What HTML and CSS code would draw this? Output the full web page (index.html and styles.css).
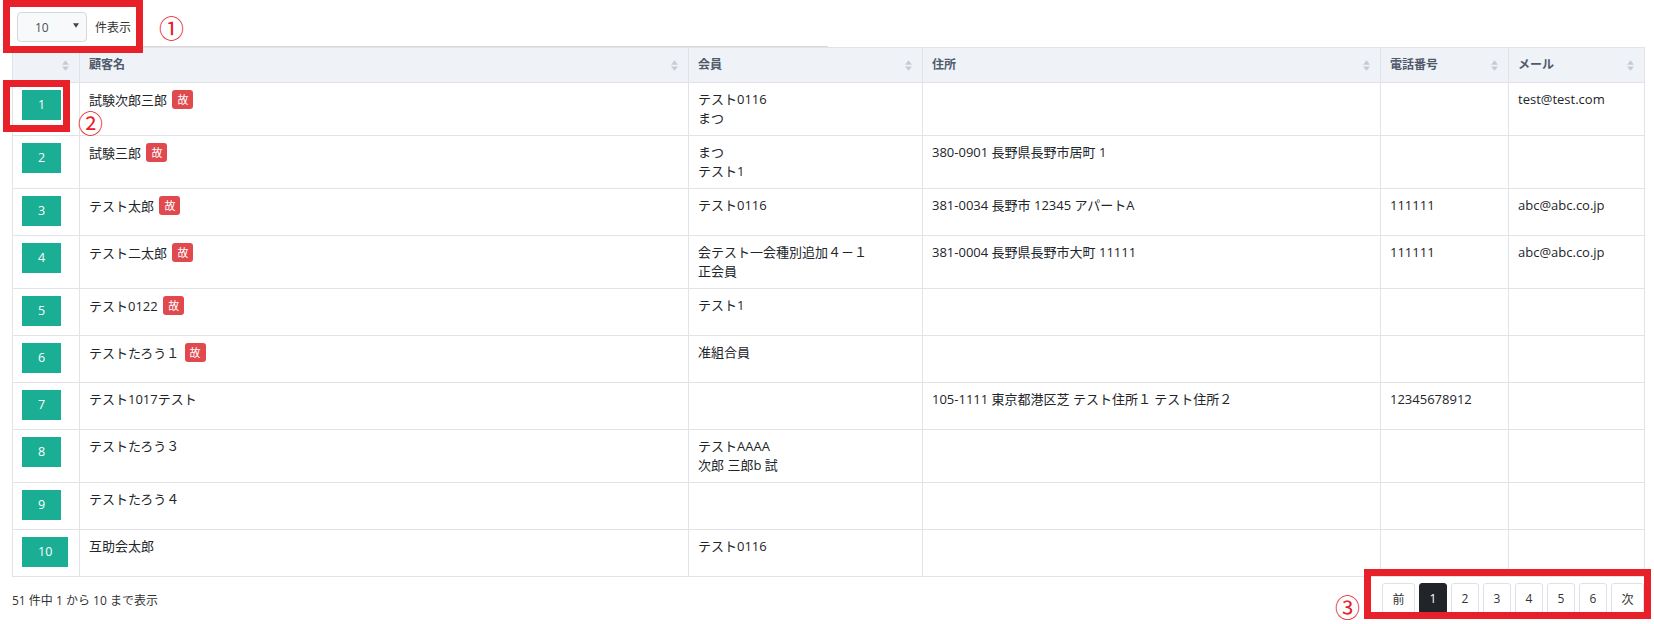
FILE: index.html
```html
<!DOCTYPE html>
<html lang="ja">
<head>
<meta charset="utf-8">
<title>顧客一覧</title>
<link rel="stylesheet" href="styles.css">
</head>
<body>
<div class="page">
  <div class="length">
    <div class="select"><span>10</span><svg class="caret" viewBox="0 0 8 6"><path d="M0 0H8L4 6Z"/></svg></div>
    <span class="length-label">件表示</span>
  </div>
  <div class="top-rule"></div>
  <table class="grid">
    <colgroup>
      <col class="c-idx"><col class="c-name"><col class="c-member"><col class="c-addr"><col class="c-tel"><col class="c-mail">
    </colgroup>
    <thead>
      <tr>
        <th><div class="th-in"><span></span><svg class="sort" viewBox="0 0 8 12"><path d="M4 0L8 5H0Z"/><path d="M4 12L0 7H8Z"/></svg></div></th>
        <th><div class="th-in"><span>顧客名</span><svg class="sort" viewBox="0 0 8 12"><path d="M4 0L8 5H0Z"/><path d="M4 12L0 7H8Z"/></svg></div></th>
        <th><div class="th-in"><span>会員</span><svg class="sort" viewBox="0 0 8 12"><path d="M4 0L8 5H0Z"/><path d="M4 12L0 7H8Z"/></svg></div></th>
        <th><div class="th-in"><span>住所</span><svg class="sort" viewBox="0 0 8 12"><path d="M4 0L8 5H0Z"/><path d="M4 12L0 7H8Z"/></svg></div></th>
        <th><div class="th-in"><span>電話番号</span><svg class="sort" viewBox="0 0 8 12"><path d="M4 0L8 5H0Z"/><path d="M4 12L0 7H8Z"/></svg></div></th>
        <th><div class="th-in"><span>メール</span><svg class="sort" viewBox="0 0 8 12"><path d="M4 0L8 5H0Z"/><path d="M4 12L0 7H8Z"/></svg></div></th>
      </tr>
    </thead>
    <tbody>
      <tr><td><span class="num">1</span></td><td>試験次郎三郎 <span class="badge">故</span></td><td>テスト0116<br>まつ</td><td></td><td></td><td>test@test.com</td></tr>
      <tr><td><span class="num">2</span></td><td>試験三郎 <span class="badge">故</span></td><td>まつ<br>テスト1</td><td>380-0901 長野県長野市居町 1</td><td></td><td></td></tr>
      <tr><td><span class="num">3</span></td><td>テスト太郎 <span class="badge">故</span></td><td>テスト0116</td><td>381-0034 長野市 12345 アパートA</td><td>111111</td><td>abc@abc.co.jp</td></tr>
      <tr><td><span class="num">4</span></td><td>テスト二太郎 <span class="badge">故</span></td><td>会テスト一会種別追加４－１<br>正会員</td><td>381-0004 長野県長野市大町 11111</td><td>111111</td><td>abc@abc.co.jp</td></tr>
      <tr><td><span class="num">5</span></td><td>テスト0122 <span class="badge">故</span></td><td>テスト1</td><td></td><td></td><td></td></tr>
      <tr><td><span class="num">6</span></td><td>テストたろう１ <span class="badge">故</span></td><td>准組合員</td><td></td><td></td><td></td></tr>
      <tr><td><span class="num">7</span></td><td>テスト1017テスト</td><td></td><td>105-1111 東京都港区芝 テスト住所１ テスト住所２</td><td>12345678912</td><td></td></tr>
      <tr><td><span class="num">8</span></td><td>テストたろう３</td><td>テストAAAA<br>次郎 三郎b 試</td><td></td><td></td><td></td></tr>
      <tr><td><span class="num">9</span></td><td>テストたろう４</td><td></td><td></td><td></td><td></td></tr>
      <tr><td><span class="num">10</span></td><td>互助会太郎</td><td>テスト0116</td><td></td><td></td><td></td></tr>
    </tbody>
  </table>
  <div class="footer">
    <div class="info">51 件中 1 から 10 まで表示</div>
    <div class="pager">
      <span class="pg wide">前</span>
      <span class="pg active">1</span>
      <span class="pg">2</span>
      <span class="pg">3</span>
      <span class="pg">4</span>
      <span class="pg">5</span>
      <span class="pg">6</span>
      <span class="pg wide">次</span>
    </div>
  </div>

  <div class="mark box1"></div>
  <div class="mark box2"></div>
  <div class="mark box3"></div>
  <span class="circ c1">①</span>
  <span class="circ c2">②</span>
  <span class="circ c3">③</span>
</div>
</body>
</html>
```

FILE: styles.css
```css
* { box-sizing: border-box; }
html, body { margin: 0; padding: 0; background: #fff; }
body {
  font-family: "Open Sans", "Noto Sans CJK JP", sans-serif;
  font-size: 13px;
  color: #212529;
}
.page {
  position: relative;
  width: 1654px;
  height: 624px;
  padding: 12px 10px 0 12px;
}
.length {
  display: flex;
  align-items: center;
  height: 30px;
  padding-left: 5px;
}
.select {
  width: 70px;
  height: 30px;
  border: 1px solid #d4d7dc;
  border-radius: 4px;
  background: #f8f9fa;
  display: flex;
  align-items: center;
  justify-content: space-between;
  padding: 0 7px 0 17px;
  font-size: 12px;
  color: #495057;
}
.caret { width: 6px; height: 5px; fill: #444; margin-top: -3px; }
.length-label { margin-left: 8px; font-size: 12px; color: #333; }
.top-rule {
  margin-top: 4px;
  width: 816px;
  height: 1px;
  background: #d9d9d9;
}
.grid {
  width: 1632px;
  border-collapse: collapse;
  table-layout: fixed;
  border: 1px solid #e1e3e6;
}
.c-idx { width: 67px; }
.c-name { width: 609px; }
.c-member { width: 234px; }
.c-addr { width: 458px; }
.c-tel { width: 128px; }
.c-mail { width: 136px; }
th {
  background: #eff2f7;
  border: 1px solid #e1e3e6;
  padding: 8px 9px;
  height: 35px;
  text-align: left;
  font-size: 12px;
  font-weight: bold;
  color: #4f5a6b;
  line-height: 18px;
}
.th-in { display: flex; align-items: center; justify-content: space-between; }
.sort { width: 7px; height: 11px; fill: #c6ccd6; margin-right: 1px; }
td {
  border: 1px solid #e1e3e6;
  padding: 7px 9px;
  line-height: 19px;
  vertical-align: top;
}
.num {
  display: block;
  width: fit-content;
  height: 30px;
  line-height: 30px;
  padding: 0 16px;
  margin-bottom: 2px;
  background: #1aae95;
  color: #fff;
  font-size: 12.5px;
}
.badge {
  display: inline-block;
  height: 19px;
  line-height: 19px;
  padding: 0 5px;
  margin-left: 2px;
  border-radius: 3px;
  background: #e04a4f;
  color: #fff;
  font-size: 11px;
  vertical-align: 1px;
}
.footer {
  display: flex;
  justify-content: space-between;
  align-items: flex-start;
  margin-top: 6px;
}
.info { font-size: 12px; color: #333; margin-top: 8px; }
.pager { display: flex; gap: 4px; }
.pg {
  width: 28px;
  height: 31px;
  border: 1px solid #dee2e6;
  border-radius: 3px;
  display: flex;
  align-items: center;
  justify-content: center;
  font-size: 12px;
  color: #333;
  background: #fff;
}
.pg.wide { width: 33px; }
.pg.active { background: #212529; border-color: #212529; color: #fff; }
.mark {
  position: absolute;
  border: 7px solid #e8202a;
}
.box1 { left: 3px; top: 0; width: 140px; height: 53px; }
.box2 { left: 3px; top: 80px; width: 67px; height: 52px; }
.box3 { left: 1364px; top: 569px; width: 287px; height: 50px; }
.circ {
  position: absolute;
  color: #e8202a;
  font-family: "Noto Sans CJK JP", sans-serif;
  font-size: 25px;
  line-height: 1;
}
.c1 { left: 159px; top: 15px; }
.c2 { left: 78px; top: 110px; }
.c3 { left: 1335px; top: 594px; }
```
